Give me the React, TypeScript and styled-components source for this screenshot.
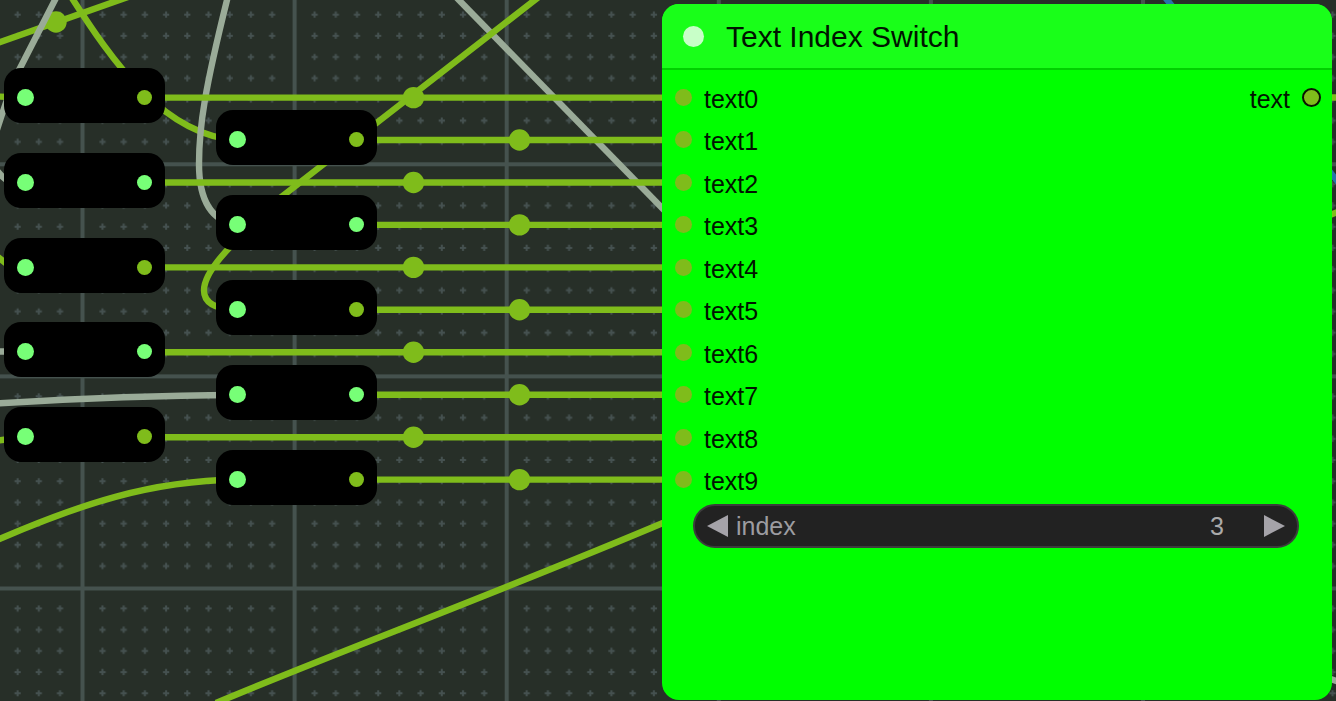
import React from "react";
import styled, { createGlobalStyle } from "styled-components";

const lime = "#7fbc1b";
const mint = "#77ff77";
const ash = "#9aab98";

const GlobalStyle = createGlobalStyle`
  body {
    margin: 0;
    background: #272f28;
    font-family: "Liberation Sans", Arial, sans-serif;
  }
`;

const Canvas = styled.main`
  position: relative;
  width: 100%;
  height: 100vh;
  overflow: hidden;
  background: #272f28;
`;

const Wires = styled.svg`
  display: block;
  width: 100%;
  height: 100%;
`;

const Reroute = styled.div<{ $x: number; $y: number }>`
  position: absolute;
  left: ${(p) => p.$x}px;
  top: ${(p) => p.$y}px;
  box-sizing: border-box;
  width: 161px;
  height: 55px;
  padding: 4px 13px 0;
  border-radius: 17px;
  background: #000;
  display: flex;
  align-items: center;
  justify-content: space-between;
`;

const Port = styled.span<{ $size: number; $color: string }>`
  flex: none;
  box-sizing: border-box;
  width: ${(p) => p.$size}px;
  height: ${(p) => p.$size}px;
  border-radius: 50%;
  background: ${(p) => p.$color};
`;

const OutPort = styled(Port)`
  border: 2px solid #0a1400;
`;

const Node = styled.section`
  position: absolute;
  left: 662px;
  right: 4px;
  top: 4px;
  bottom: 1px;
  border-radius: 17px;
  overflow: hidden;
  background: #00ff00;
`;

const NodeHeader = styled.header`
  box-sizing: border-box;
  height: 66px;
  padding: 0 21px;
  display: flex;
  align-items: center;
  gap: 22px;
  background: #19ff19;
  border-bottom: 2px solid #00d000;
`;

const Title = styled.h1`
  margin: 0;
  padding-top: 2px;
  font-size: 30px;
  line-height: 36px;
  font-weight: 400;
  color: #001400;
`;

const Slots = styled.div`
  display: flex;
  justify-content: space-between;
  padding: 6px 11px 0 13px;
`;

const Inputs = styled.ul`
  flex: 1;
  height: 425px;
  margin: 0;
  padding: 0;
  list-style: none;
  display: grid;
  grid-template-rows: repeat(10, 1fr);
`;

const Slot = styled.li`
  display: flex;
  align-items: center;
  gap: 12px;
`;

const Output = styled.div`
  height: 42px;
  display: flex;
  align-items: center;
  gap: 12px;
`;

const SlotLabel = styled.span`
  padding-top: 3px;
  font-size: 25px;
  line-height: 30px;
  color: #001400;
`;

const Stepper = styled.div`
  box-sizing: border-box;
  height: 44px;
  margin: 3px 33px 0 31px;
  padding: 0 12px;
  border: 2px solid #3c3c3c;
  border-radius: 22px;
  background: #222;
  display: flex;
  align-items: center;
  color: #9c9ca0;
  font-size: 25px;
  line-height: 30px;
`;

const StepButton = styled.button`
  display: flex;
  padding: 0;
  border: 0;
  background: none;
  color: #a5a3a9;
`;

const StepLabel = styled.label`
  margin-left: 8px;
`;

const StepValue = styled.input`
  flex: 1;
  min-width: 0;
  margin-right: 40px;
  padding: 0;
  border: 0;
  outline: 0;
  background: none;
  color: #aaa;
  font: inherit;
  text-align: right;
`;

const leftTops = [68, 153, 238, 322, 407];
const rightTops = [110, 195, 280, 365, 450];
const leftOut = [lime, mint, lime, mint, lime];
const rightOut = [lime, mint, lime, mint, lime];

const steps = [1, 2, 3, 4, 5, 6, 7, 8, 9];
const crosses = steps
  .flatMap((i) =>
    steps.map((j) => {
      const x = i * 21.2 + 0.8;
      const y = j * 21.2 + 0.8;
      return `M${x - 3.1} ${y}h6.2M${x} ${y - 3.1}v6.2`;
    })
  )
  .join("");

function Graph() {
  return (
    <Wires aria-hidden="true">
      <defs>
        <pattern id="grid" x="80.5" y="162.3" width="212.1" height="212.1" patternUnits="userSpaceOnUse">
          <path d={crosses} stroke="#455150" strokeWidth="2" />
          <path d="M2 0V213M0 2H213" stroke="#45524e" strokeWidth="4" />
        </pattern>
      </defs>
      <rect width="100%" height="100%" fill="url(#grid)" />
      <g fill="none" strokeWidth="6.4">
        <g stroke={lime}>
          <path d="M-4 43.5L128 -3" />
          <path d="M70 -5C112 61 164 136 237 140" />
          <path d="M-10 543C82 503 150 481 237 479.5" />
          <path d="M216 703C330 655 500 592 670 520" />
          <path d="M-5 96.500L25 97.500M-8 252Q0 259 8 265M-5 441L25 437" />
          <path d="M1300 97.500H1400M1325 217L1345 209" />
        </g>
        <circle cx="56" cy="22" r="10.700" fill={lime} />
        <g stroke={ash}>
          <path d="M57 -4L17 74M8 97C3 111 0 120 -5 136M-6 166Q0 176 8 181M-5 351.500H25" />
          <path d="M228 -4C205 88 199 126 199 164C199 200 211 221 237 225" />
          <path d="M-5 403.500C70 399 150 395.500 237 395" />
          <path d="M455 -4L665 211" />
          <path d="M1325 677L1345 684" />
        </g>
        <path d="M540 -4L280 198M234 243C195 282 192 308 237 310" stroke={lime} />
        <path d="M1164 -4L1172 6M1322 162L1342 187" stroke="#2674a8" />
        {leftTops.map((_, i) => (
          <g key={i}>
            <path d={`M144 ${97.6 + i * 84.9}H680M356 ${140 + i * 84.9}H680`} stroke={lime} />
            <circle cx="413.500" cy={97.6 + i * 84.9} r="10.700" fill={lime} />
            <circle cx="519.500" cy={140 + i * 84.9} r="10.700" fill={lime} />
          </g>
        ))}
      </g>
    </Wires>
  );
}

export default function App() {
  return (
    <>
      <GlobalStyle />
      <Canvas>
        <Graph />
        {leftTops.map((y, i) => (
          <Reroute key={y} $x={4} $y={y}>
            <Port $size={17} $color={mint} />
            <Port $size={15} $color={leftOut[i]} />
          </Reroute>
        ))}
        {rightTops.map((y, i) => (
          <Reroute key={y} $x={216} $y={y}>
            <Port $size={17} $color={mint} />
            <Port $size={15} $color={rightOut[i]} />
          </Reroute>
        ))}
        <Node>
          <NodeHeader>
            <Port $size={21} $color="#c8ffc8" />
            <Title>Text Index Switch</Title>
          </NodeHeader>
          <Slots>
            <Inputs>
              {Array.from({ length: 10 }, (_, i) => (
                <Slot key={i}>
                  <Port $size={17} $color={lime} />
                  <SlotLabel>text{i}</SlotLabel>
                </Slot>
              ))}
            </Inputs>
            <Output>
              <SlotLabel>text</SlotLabel>
              <OutPort $size={19} $color={lime} />
            </Output>
          </Slots>
          <Stepper>
            <StepButton type="button" aria-label="Decrease index">
              <svg width="21" height="22" viewBox="0 0 21 22">
                <path d="M21 0V22L0 11Z" fill="currentColor" />
              </svg>
            </StepButton>
            <StepLabel htmlFor="index">index</StepLabel>
            <StepValue id="index" defaultValue="3" inputMode="numeric" />
            <StepButton type="button" aria-label="Increase index">
              <svg width="21" height="22" viewBox="0 0 21 22">
                <path d="M0 0V22L21 11Z" fill="currentColor" />
              </svg>
            </StepButton>
          </Stepper>
        </Node>
      </Canvas>
    </>
  );
}
